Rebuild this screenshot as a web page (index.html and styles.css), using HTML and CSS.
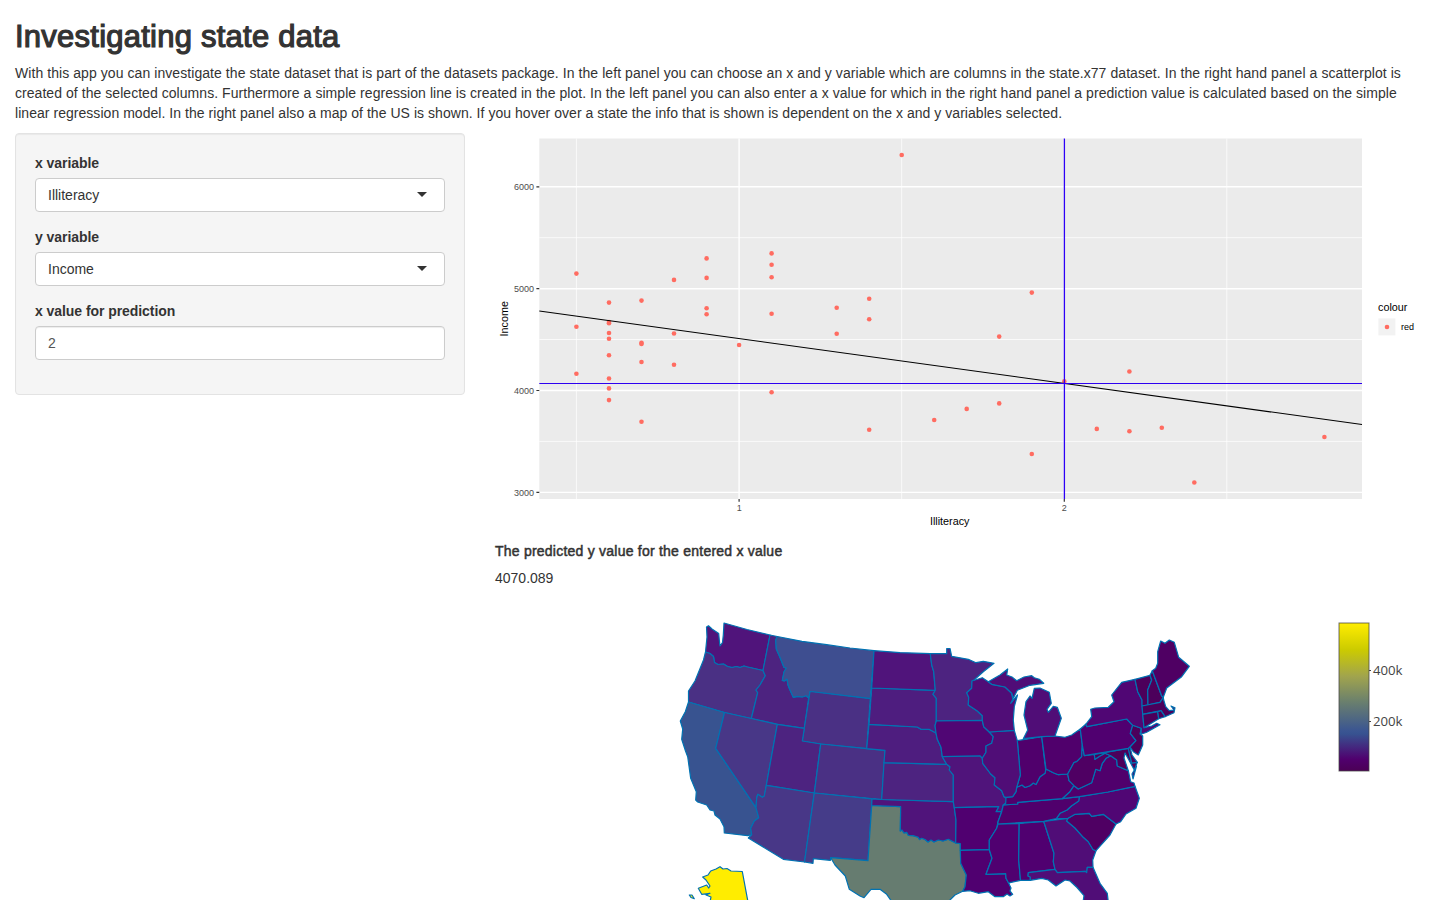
FILE: index.html
```html
<!DOCTYPE html>
<html lang="en">
<head>
<meta charset="utf-8">
<title>Investigating state data</title>
<link rel="stylesheet" href="styles.css">
</head>
<body>
<div class="container">
  <h2 class="title"><span>Investigating state data</span></h2>
  <p class="intro">
    <span class="l1">With this app you can investigate the state dataset that is part of the datasets package. In the left panel you can choose an x and y variable which are columns in the state.x77 dataset. In the right hand panel a scatterplot is</span><br>
    <span class="l2">created of the selected columns. Furthermore a simple regression line is created in the plot. In the left panel you can also enter a x value for which in the right hand panel a prediction value is calculated based on the simple</span><br>
    <span class="l3">linear regression model. In the right panel also a map of the US is shown. If you hover over a state the info that is shown is dependent on the x and y variables selected.</span>
  </p>
  <div class="row">
    <form class="well">
      <div class="group"><label>x variable</label><div class="control select">Illiteracy<i class="caret"></i></div></div>
      <div class="group"><label>y variable</label><div class="control select">Income<i class="caret"></i></div></div>
      <div class="group"><label>x value for prediction</label><div class="control number">2</div></div>
    </form>
    <main class="main">
      <svg class="plot" viewBox="495 133 930 400" width="930" height="400">
        <rect x="539.3" y="138.5" width="822.7" height="360.5" fill="#ebebeb"/>
        <g stroke="#fff" stroke-width=".75">
          <path d="M539.3 237.7H1362M539.3 339.5H1362M539.3 441.4H1362M576.4 138.5V499M901.7 138.5V499M1226.8 138.5V499"/>
        </g>
        <g stroke="#fff" stroke-width="1.4">
          <path d="M539.3 186.8H1362M539.3 288.7H1362M539.3 390.5H1362M539.3 492.4H1362M739.1 138.5V499M1064.3 138.5V499"/>
        </g>
        <g fill="#ff6c61" id="points">
          <circle cx="576.4" cy="273.6" r="2.3"/><circle cx="576.4" cy="326.7" r="2.3"/><circle cx="576.4" cy="373.7" r="2.3"/>
          <circle cx="609" cy="302.6" r="2.3"/><circle cx="609" cy="322" r="2.3"/><circle cx="609" cy="323.3" r="2.3"/><circle cx="609" cy="333" r="2.3"/><circle cx="609" cy="338.8" r="2.3"/><circle cx="609" cy="355.3" r="2.3"/><circle cx="609" cy="378.5" r="2.3"/><circle cx="609" cy="388.4" r="2.3"/><circle cx="609" cy="400.1" r="2.3"/>
          <circle cx="641.5" cy="300.6" r="2.3"/><circle cx="641.5" cy="342.9" r="2.3"/><circle cx="641.5" cy="343.9" r="2.3"/><circle cx="641.5" cy="362" r="2.3"/><circle cx="641.5" cy="421.8" r="2.3"/>
          <circle cx="674" cy="279.9" r="2.3"/><circle cx="674" cy="333.5" r="2.3"/><circle cx="674" cy="364.8" r="2.3"/>
          <circle cx="706.6" cy="258.4" r="2.3"/><circle cx="706.6" cy="277.9" r="2.3"/><circle cx="706.6" cy="308.3" r="2.3"/><circle cx="706.6" cy="314.3" r="2.3"/>
          <circle cx="739.1" cy="345" r="2.3"/>
          <circle cx="771.6" cy="253.4" r="2.3"/><circle cx="771.6" cy="264.7" r="2.3"/><circle cx="771.6" cy="277.2" r="2.3"/><circle cx="771.6" cy="313.7" r="2.3"/><circle cx="771.6" cy="392.3" r="2.3"/>
          <circle cx="836.7" cy="307.7" r="2.3"/><circle cx="836.7" cy="333.8" r="2.3"/>
          <circle cx="869.2" cy="298.7" r="2.3"/><circle cx="869.2" cy="319.3" r="2.3"/><circle cx="869.2" cy="429.8" r="2.3"/>
          <circle cx="901.7" cy="155" r="2.3"/><circle cx="934.2" cy="420" r="2.3"/><circle cx="966.7" cy="408.9" r="2.3"/>
          <circle cx="999.2" cy="336.6" r="2.3"/><circle cx="999.2" cy="403.4" r="2.3"/>
          <circle cx="1031.8" cy="292.6" r="2.3"/><circle cx="1031.8" cy="454" r="2.3"/><circle cx="1064.3" cy="381.4" r="2.3"/>
          <circle cx="1096.8" cy="428.9" r="2.3"/><circle cx="1129.4" cy="371.5" r="2.3"/><circle cx="1129.4" cy="431.3" r="2.3"/>
          <circle cx="1161.8" cy="427.8" r="2.3"/><circle cx="1194.3" cy="482.5" r="2.3"/><circle cx="1324.4" cy="437" r="2.3"/>
        </g>
        <path d="M539.3 311L1362 424.5" stroke="#000" stroke-width="1.1"/>
        <path d="M539.3 383.5H1362" stroke="#2d00f0" stroke-width="1.1"/>
        <path d="M1064.4 138.5V499" stroke="#2d00f5" stroke-width="1.3"/>
        <path d="M536.4 186.8h2.9M536.4 288.7h2.9M536.4 390.5h2.9M536.4 492.4h2.9M739.1 499v2.8M1064.3 499v2.8" stroke="#333" stroke-width="1.2"/>
        <g class="tick" text-anchor="end"><text x="534" y="190">6000</text><text x="534" y="292">5000</text><text x="534" y="394">4000</text><text x="534" y="495.7">3000</text></g>
        <g class="tick" text-anchor="middle"><text x="739.3" y="511">1</text><text x="1064.3" y="511">2</text></g>
        <text class="axis" text-anchor="middle" x="949.7" y="525">Illiteracy</text>
        <text class="axis" text-anchor="middle" transform="translate(508 318.7) rotate(-90)">Income</text>
        <text class="axis" x="1378" y="311">colour</text>
        <rect x="1378.4" y="318.4" width="17" height="17" fill="#f2f2f2"/>
        <circle cx="1387" cy="327" r="2.3" fill="#ff6c61"/>
        <text class="tick dark" x="1401" y="330">red</text>
      </svg>
      <h5 class="result-title">The predicted y value for the entered x value</h5>
      <div class="result">4070.089</div>
      <svg class="map" viewBox="495 588 930 312" width="930" height="312">
        <defs><linearGradient id="scale" x1="0" y1="1" x2="0" y2="0">
          <stop offset="0" stop-color="#4b0055"/><stop offset=".08" stop-color="#50006e"/><stop offset=".25" stop-color="#375290"/><stop offset=".27" stop-color="#3a5592"/><stop offset=".47" stop-color="#6b806d"/><stop offset=".64" stop-color="#a1a44d"/><stop offset=".82" stop-color="#cccb00"/><stop offset="1" stop-color="#ffed00"/>
        </linearGradient></defs>
        <g class="states">
          <path class="c5" d="M706.5 627L708.5 625.8L712 629L718.7 633.5L719.3 640L720 646L722.5 642.5L723.3 635L724 623L747 629.5L770 635L763 670.5L747.5 667L744 666L740 667.5L736.5 666.5L732 667.5L727.5 666.5L723.5 664L718 664.5L714.5 662.5L713.5 656.5L710 653.5L705.5 652L707 637Z"/>
          <path class="c8" d="M705.5 652L710 653.5L713.5 656.5L714.5 662.5L718 664.5L723.5 664L727.5 666.5L732 667.5L736.5 666.5L740 667.5L744 666L747.5 667L763 670.5L765.3 675.7L760 685L756 690L757.7 692.7L751.3 718.5L724.5 712.5L688.5 702L688.5 691L695 681L703.5 660Z"/>
          <path class="c7" d="M770 635L777.3 636.5L775.7 640L776.3 649L780.7 659L784 667.5L786.3 668L784 672L782.3 680.5L784.3 681L787 679L788 685L790 690L793.3 697.3L797.3 696.3L802.3 697L806 695.7L808.7 698L804.3 728.3L777.3 724.3L751.3 718.5L757.7 692.7L756 690L760 685L765.3 675.7L763 670.5Z"/>
          <path class="mt" d="M777.3 636.5L802 641.3L826.7 644.7L850 648L874 650.7L870.3 698.7L810 691.5L808.7 698L806 695.7L802.3 697L797.3 696.3L793.3 697.3L790 690L788 685L787 679L784.3 681L782.3 680.5L784 672L786.3 668L784 667.5L780.7 659L776.3 649L775.7 640Z"/>
          <path class="c8" d="M810 691.5L870.3 698.7L866.7 748.7L820.7 744L802.3 741Z"/>
          <path class="ca" d="M688.5 702L724.5 712.5L715.7 748.3L756 807.7L758.7 817.7L754.3 821L750.7 828.3L751.7 834.7L747.7 835.7L724.3 833L724 826.7L720 819L715 815L714 811L710 810L706.7 805L697.7 802L695.7 800L696.3 791.7L690.7 778.3L687.7 756.7L685.5 751L681.7 739.3L682.7 729L680.3 721L685.3 711.7Z"/>
          <path class="c9" d="M724.5 712.5L751.3 718.5L777.3 724.3L766.3 785.3L764.3 796L762.3 797.3L757.7 794.3L756.7 798L756 807.7L715.7 748.3Z"/>
          <path class="c7" d="M777.3 724.3L804.3 728.3L802.3 741L820.7 744L814.3 793L766.3 785.3Z"/>
          <path class="c8" d="M820.7 744L866.7 748.7L885 750.3L881.7 799.5L814.3 793Z"/>
          <path class="c9" d="M766.3 785.3L814.3 793L804.5 862L783.3 859.3L748.3 838L751.7 834.7L750.7 828.3L754.3 821L758.7 817.7L756 807.7L756.7 798L757.7 794.3L762.3 797.3L764.3 796Z"/>
          <path class="nm" d="M814.3 793L872 798.8L871.7 805.5L868 860.7L830.7 857.7L830.3 860.3L813.3 858.7L813 863.3L804.5 862Z"/>
          <path class="tx" d="M871.7 805.5L900.7 806.7L900.3 831L902 830L904 833L906.7 832.3L908.3 835.3L913 835.6L918.3 837.3L919.5 839.5L921.7 838.3L925 839.5L928 842L931 840L934 842L938.3 840L943 841L948.3 839.3L955.7 843L960.3 843.7L960.7 863.3L966.3 875L965 886.7L962.7 891.3L955 895L948 902H892L886.7 894.3L880 889.3H871L864 897.7L860 896L849.3 889.3L845.3 876L835 865L830.7 857.7L868 860.7Z"/>
          <path class="c5" d="M872 798.8L881.7 799.5L953.3 801.7L954.3 807.7L956 820L955.7 843L948.3 839.3L943 841L938.3 840L934 842L931 840L928 842L925 839.5L921.7 838.3L919.5 839.5L918.3 837.3L913 835.6L908.3 835.3L906.7 832.3L904 833L902 830L900.3 831L900.7 806.7L871.7 805.5Z"/>
          <path class="c7" d="M884 762.7L946.7 764.3L950 766.7L949.3 770L953.3 775V801.7L881.7 799.5Z"/>
          <path class="c6" d="M869 724.3L917.3 727L921 729.3H929L936 733L937.3 739.3L941 747.3L942.3 756.7L946.7 764.3L884 762.7L885 750.3L866.7 748.7Z"/>
          <path class="c6" d="M871.7 688L935.3 690.3L933 694.3L936.3 698.3V721L935 725.7L936 733L929 729.3H921L917.3 727L869 724.3Z"/>
          <path class="c5" d="M874 650.7L900 652.6L930.3 653.7L931.7 665L933.7 671.7L935.3 690.3L871.7 688Z"/>
          <path class="c7" d="M930.3 653.7H946.7V648.5H950L951.7 656.3L968.3 659.3L976 662.7L983.3 661.3L994 663.3L983.3 671.7L974.3 679.7L972 681L971.7 688.3L966.7 692.7L968.7 697.3L968.3 705L977.3 711L982.3 715.7V720.3L936.3 721V698.3L933 694.3L935.3 690.3L933.7 671.7L931.7 665Z"/>
          <path class="c3" d="M936.3 721L982.3 720.3L983.7 726.7L989.3 732L993.3 736.7L991.7 743.3L986 746V752.3L982.3 758.3L980 756L942.3 756.7L941 747.3L937.3 739.3L936 733L935 725.7Z"/>
          <path class="c5" d="M942.3 756.7L980 756L982.3 758.3L982.7 763.3L990.7 774L995 777.7L994.3 785L1001.7 790.7L1004 796.7L1007 799L1005.7 803.3L1003.3 805L1001.7 811.7H996L998.7 806.7L954.3 807.7L953.3 801.7V775L949.3 770L950 766.7L946.7 764.3Z"/>
          <path class="c2" d="M954.3 807.7L998.7 806.7L996 811.7H1001.7L998 821.7L996.7 828.3L989.3 840V849.7L960.3 850.3V843.7L955.7 843L956 820Z"/>
          <path class="c2" d="M960.3 850.3L989.3 849.7L992 858.3L986 874.3L1005.7 873.7L1006 878.3L1008.7 883.3L1011 888L1010 891L1012.7 894.3L1010 896L1007 894L1003.3 896.7H995L988.3 891.7L978.3 893.3L970 890.7L962.7 891.3L965 886.7L966.3 875L960.7 863.3Z"/>
          <path class="c2" d="M998 824L1019.2 823.5L1018.7 860L1020.5 880.3L1010 882.7L1008.7 883.3L1006 878.3L1005.7 873.7L986 874.3L992 858.3L989.3 849.7V840L996.7 828.3Z"/>
          <path class="c2" d="M1019.2 823.5L1043.7 821.3L1054 853.3L1053.3 861.7L1055 869.3L1028.3 872.7L1028 876L1030.3 877L1030.3 880.3L1020.5 880.3L1018.7 860Z"/>
          <path class="c4" d="M1043.7 821.3L1068 818.3L1066.7 821L1075 828L1083.3 837.3L1088.3 841.7L1093 849.5L1096 850.7L1092.7 860L1093 867.3H1087.3L1086.7 872.7L1085.5 871.3L1057.3 872.7L1055 869.3L1053.3 861.7L1054 853.3Z"/>
          <path class="c4" d="M1028.3 872.7L1055 869.3L1057.3 872.7L1085.5 871.3L1086.7 872.7L1087.3 867.3H1093L1100 883.3L1107.3 893.3L1108.3 902H1083L1084 895.7L1077 887.5L1070 881L1065 880L1056 886L1048.3 880L1041.7 878.3L1030.3 880.3V877L1028 876Z"/>
          <path class="c1" d="M1068 818.3L1075 814.3L1089.3 813.3L1091.7 816.3L1103.3 814.3L1116 824L1110 835L1096 850.7L1093 849.5L1088.3 841.7L1083.3 837.3L1075 828L1066.7 821Z"/>
          <path class="c3" d="M1079.3 796.7L1108 792L1135 786.3L1139.3 798.3L1136 808.3L1126 814L1120.7 821.7L1116 824L1103.3 814.3L1091.7 816.3L1089.3 813.3L1075 814.3L1068 818.3L1056.3 818.7L1060 813.3L1067 810L1071.7 805.7L1078.7 801Z"/>
          <path class="c1b" d="M1003.3 805L1017.7 804V802.3L1062.3 798.7L1079.3 796.7L1078.7 801L1071.7 805.7L1067 810L1060 813.3L1056.3 818.7L1043.7 821.3L998 824V821.7L1001.7 811.7Z"/>
          <path class="c1b" d="M1003.3 805L1005.7 803.3L1006 797.3L1012.7 796.7L1016 791.7L1016.7 787.3L1022 785L1025 787.5L1030 785.7L1033.3 783L1036 784.5L1040 776.7L1045 773.3L1046 769L1053.3 772.7L1058.3 774.7L1067.7 774L1069 780.7L1074 785.7L1070 791.7L1062.3 798.7L1017.7 802.3V804Z"/>
          <path class="c1b" d="M1017.3 740.7L1041.7 736.7L1045.7 770L1045 773.3L1040 776.7L1036 784.5L1033.3 783L1030 785.7L1025 787.5L1022 785L1016.7 787.3L1020.3 775Z"/>
          <path class="c4" d="M989.3 732L1014.3 730.3L1017.3 740.7L1020.3 775L1016.7 787.3L1016 791.7L1012.7 796.7L1006 797.3L1004 796.7L1001.7 790.7L994.3 785L995 777.7L990.7 774L982.7 763.3L982.3 758.3L986 752.3V746L991.7 743.3L993.3 736.7Z"/>
          <path class="c1b" d="M1041.7 736.7L1055 736L1065 737.3L1071.7 735L1080.3 729L1082.3 745L1081.7 756.7L1076.7 761.7L1074 762.5L1071 768L1067.7 774L1058.3 774.7L1053.3 772.7L1046 769Z"/>
          <path class="c1b" d="M1074 785.7L1078.3 789L1091.7 782.7L1095.7 769.3L1100 770.7L1102.3 763.3L1106 758.3L1110.7 755.7L1116.7 760L1117.3 766L1128.3 770.7L1130.7 781.7L1134 783L1135 786.3L1108 792L1079.3 796.7L1062.3 798.7L1070 791.7Z"/>
          <path class="c1" d="M1082.3 745L1084.3 755.7L1094.3 754.3L1095 759.3L1100 756L1105 753.3L1110.7 755.7L1106 758.3L1102.3 763.3L1100 770.7L1095.7 769.3L1091.7 782.7L1078.3 789L1074 785.7L1069 780.7L1067.7 774L1071 768L1074 762.5L1076.7 761.7L1081.7 756.7Z"/>
          <path class="c0" d="M1094.3 754.3L1128.3 748.3L1131.7 763L1137.3 762.3L1134.3 770L1130 762L1125 753L1124 758L1128.3 770.7L1117.3 766L1116.7 760L1110.7 755.7L1105 753.3L1100 756L1095 759.3Z"/>
          <path class="c0" d="M1128.3 748.3L1130 747L1132 755L1137.3 762.3L1131.7 763Z"/>
          <path class="c1b" d="M1134.3 770L1136.5 766L1133 779L1132 774Z"/>
          <path class="c2" d="M1080.3 729L1086 724L1086.7 726.7L1126.7 719L1132.7 725.3L1130.3 733.3L1136 740.7L1130 747L1128.3 748.3L1084.3 755.7L1082.3 745Z"/>
          <path class="c0" d="M1132.7 725.3L1141.3 728.3L1140 734L1142.7 736V745L1138.3 755L1133.3 751.7L1130 747L1136 740.7L1130.3 733.3Z"/>
          <path class="c3" d="M1086 724L1091.7 716.7L1090.7 709.3L1095 708L1108.3 707.3L1114 701.7L1111.7 695L1121.7 682.3L1135 679.3L1137.7 691.7L1142 700L1142.7 714.3L1144 727.7L1151.7 726L1156.7 723.3L1160 724.7L1146.7 732.3L1141 734.3L1141.3 728.3L1132.7 725.3L1126.7 719L1086.7 726.7Z"/>
          <path class="c0" d="M1135 679.3L1150 675.3L1151.7 680L1147.7 690L1148 705L1142 706V700L1137.7 691.7Z"/>
          <path class="c0" d="M1150 675.3L1152.3 670.7L1161.7 696L1163.3 697.3L1160 702.3L1148 705L1147.7 690L1151.7 680Z"/>
          <path class="c1" d="M1152.3 670.7L1155.7 668.3L1157.7 663.3V651.7L1160.7 641L1165 643.3L1169.3 640L1174.3 642.3L1178.7 657.3L1189.3 666.3L1181.7 676.7L1166.7 688L1163.3 697.3L1161.7 696Z"/>
          <path class="c0" d="M1142 706L1160 702.3L1163.3 697.3L1163.7 700L1165.7 706.7L1169.3 710.7L1174 710L1171 706L1175 707.7L1174 712.7L1165 716.7L1161 710.7L1142.7 714.3Z"/>
          <path class="c0" d="M1142.7 714.3L1157.7 711.7L1158.7 718.7L1144 727.7Z"/>
          <path class="c0" d="M1157.7 711.7L1161 710.7L1165 716.7L1158.7 718.7Z"/>
          <path class="c4" d="M972 681L982.3 677.7L988.3 681.7L991.7 684.3L1005 687L1011.7 693.3L1012.7 699.3L1010.7 703.3L1017.5 695L1014.3 706.7L1013.3 720L1014.3 730.3L989.3 732L983.7 726.7L982.3 720.3V715.7L977.3 711L968.3 705L968.7 697.3L966.7 692.7L971.7 688.3Z"/>
          <path class="c4" d="M988.3 681.7L1000 675L1007.7 669L1006.7 675L1012 677L1016.7 680.7L1024 677L1031.7 675.7L1034.3 677.7L1039.3 679.3L1043.7 683.3L1030 685.3L1017.3 690.3L1013.3 698.3L1011.7 693.3L1005 687L991.7 684.3Z"/>
          <path class="c4" d="M1034.3 688.3L1040 688L1049.3 692.3L1051.3 703.3L1047 709.3L1048.3 712.3L1053.3 706.3L1057.3 707.3L1061.3 718.3L1055 736L1041.7 736.7L1023.3 738.7L1027.7 730L1024 715L1026 701.7L1030 696L1032 698.3Z"/>
          <path class="ak" d="M720 866.7L723 869L727 868.5L731 871L742.3 871.5L748 902H710L711 897L706 895L710 893.3L701.7 894.3L698.3 888.3L706.7 885L708.7 888L710 886L706 880L702.7 877L708 875L710.7 871L716 869Z"/>
          <path class="ak" d="M689.3 895L692 895L694.3 898.7L691 897.5Z"/>
        </g>
        <rect x="1339" y="623" width="30" height="148" fill="url(#scale)" stroke="#444" stroke-opacity=".75"/>
        <path d="M1369 670.5h2M1369 721.5h2" stroke="#444"/>
        <g class="scale-label"><text x="1373" y="675">400k</text><text x="1373" y="726">200k</text></g>
      </svg>
    </main>
  </div>
</div>
</body>
</html>
```
FILE: styles.css
```css
* { box-sizing: border-box; }
body { margin: 0; height: 900px; overflow: hidden; background: #fff; color: #333; font: 14px/20px "Liberation Sans", Arial, sans-serif; }
.container { padding: 0 15px; }
.title { margin: 17px 0 6px; font-size: 31px; line-height: 40px; font-weight: 400; letter-spacing: .24px; -webkit-text-stroke: 1.2px #333; }
.intro { margin: 0 0 10px; white-space: nowrap; }
.l1 { letter-spacing: .068px; }
.l2 { letter-spacing: .05px; }
.l3 { letter-spacing: .043px; }
.row { display: flex; gap: 30px; }
.well { width: 450px; height: 262px; padding: 19px; background: #f5f5f5; border: 1px solid #e3e3e3; border-radius: 4px; box-shadow: inset 0 1px 1px rgba(0,0,0,.05); }
.group { margin-bottom: 15px; }
.group label { display: block; margin-bottom: 5px; font-weight: 700; letter-spacing: -.06px; }
.control { display: flex; align-items: center; justify-content: space-between; height: 34px; padding: 0 17px 0 12px; background: #fff; border: 1px solid #ccc; border-radius: 4px; }
.number { color: #555; box-shadow: inset 0 1px 1px rgba(0,0,0,.075); }
.caret { border: 5px solid transparent; border-top-color: #333; border-bottom: 0; margin-top: -1px; }
.main { width: 930px; }
svg { display: block; }
text { font-family: "Liberation Sans", Arial, sans-serif; }
.tick { font-size: 9px; fill: #4d4d4d; }
.dark { fill: #000; }
.axis { font-size: 10.8px; fill: #000; }
.result-title { margin: 8px 0 7px; font-size: 14px; line-height: 20px; font-weight: 400; letter-spacing: .23px; -webkit-text-stroke: .5px #333; }
.scale-label text { font: 13.2px "Open Sans", sans-serif; fill: #444; }
.states path { stroke: #0072b2; stroke-width: 1.2; stroke-linejoin: round; }
.c0 { fill: #4c005b; }
.c1 { fill: #4f0063; }
.c1b { fill: #50006c; }
.c2 { fill: #500070; }
.c3 { fill: #500674; }
.c4 { fill: #500d77; }
.c5 { fill: #50147b; }
.c6 { fill: #4e1d7f; }
.c7 { fill: #4d2380; }
.c8 { fill: #4a3084; }
.c9 { fill: #483787; }
.nm { fill: #453c89; }
.mt { fill: #3e4e90; }
.ca { fill: #385390; }
.tx { fill: #667c70; }
.ak { fill: #ffed00; }
```
